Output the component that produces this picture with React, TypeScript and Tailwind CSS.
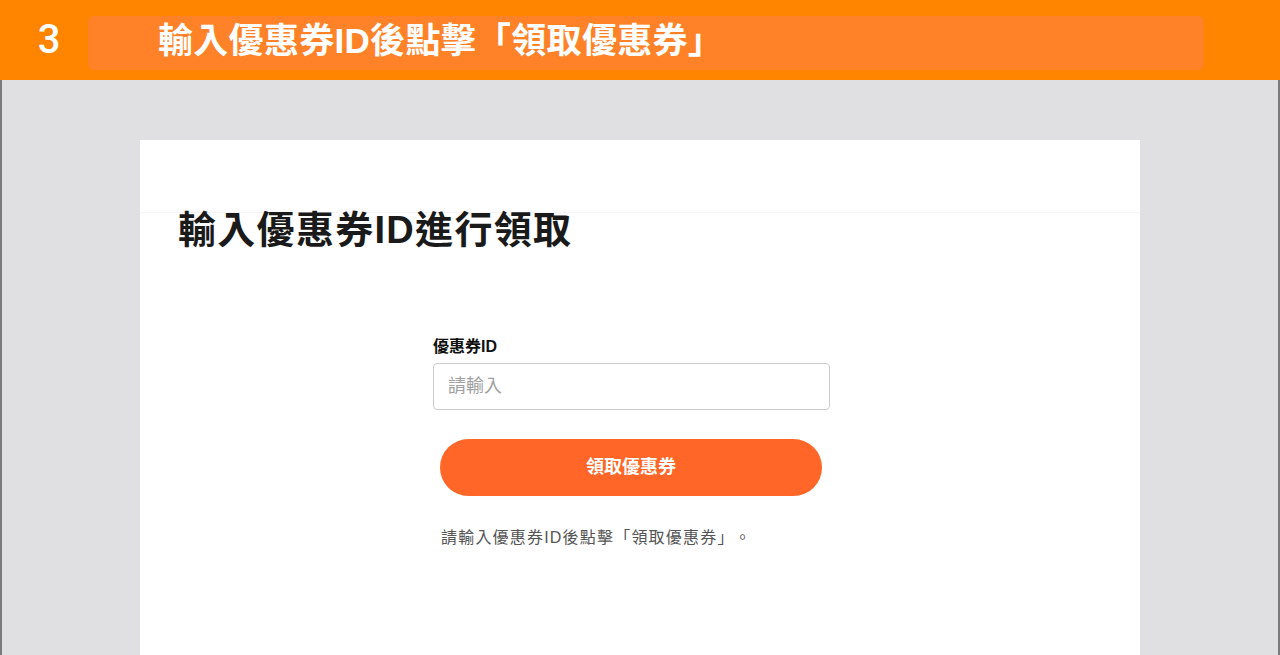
import React, { useState } from "react";

const font = "font-['Liberation_Sans','Noto_Sans_CJK_TC',sans-serif]";

export default function App() {
  const [couponId, setCouponId] = useState("");

  return (
    <div className={`w-[1280px] h-[655px] overflow-hidden [text-spacing-trim:space-all] ${font}`}>
      {/* step banner */}
      <div className="h-20 bg-[#ff8400] flex items-start">
        <div className="w-[98px] h-20 flex items-center justify-center font-['Roboto'] font-medium text-[40px] leading-none text-white">
          3
        </div>
        <div className="-ml-[10px] mt-4 w-[1116px] h-[54px] rounded-md bg-[#ff8229] flex items-center pl-[70px] pb-[6px]">
          <span className="text-[35px] font-bold tracking-[0.3px] text-white leading-none">
            輸入優惠券ID後點擊「領取優惠券」
          </span>
        </div>
      </div>

      <div className="h-[575px] bg-[#e0e0e2] border-x-2 border-[#7a7a7a] pt-[60px] px-[138px]">
        <div className="h-full bg-white">
          <div className="h-[73px] border-b border-[#f4f4f4]" />
          <h1 className="-mt-[7px] pl-[38px] text-[38px] font-bold text-[#1a1a1a] leading-[48px] tracking-[1.3px]">
            輸入優惠券ID進行領取
          </h1>

          <div className="mt-[83px] ml-[293px] w-[397px]">
            <label className="block text-[16px] font-bold text-[#111] leading-5">
              優惠券ID
            </label>
            <input
              className="mt-[6px] w-full h-[47px] rounded border border-[#cccccc] px-[14px] text-[18px] text-[#333] placeholder-[#a0a0a0] outline-none"
              placeholder="請輸入"
              value={couponId}
              onChange={(e) => setCouponId(e.target.value)}
            />
            <button className="mt-[29px] ml-[7px] w-[382px] h-[57px] rounded-full bg-[#ff6627] text-white text-[18px] font-bold">
              領取優惠券
            </button>
            <p className="mt-[30px] ml-2 text-[16px] text-[#555] tracking-[1.2px] leading-6">
              請輸入優惠券ID後點擊「領取優惠券」。
            </p>
          </div>
        </div>
      </div>
    </div>
  );
}
